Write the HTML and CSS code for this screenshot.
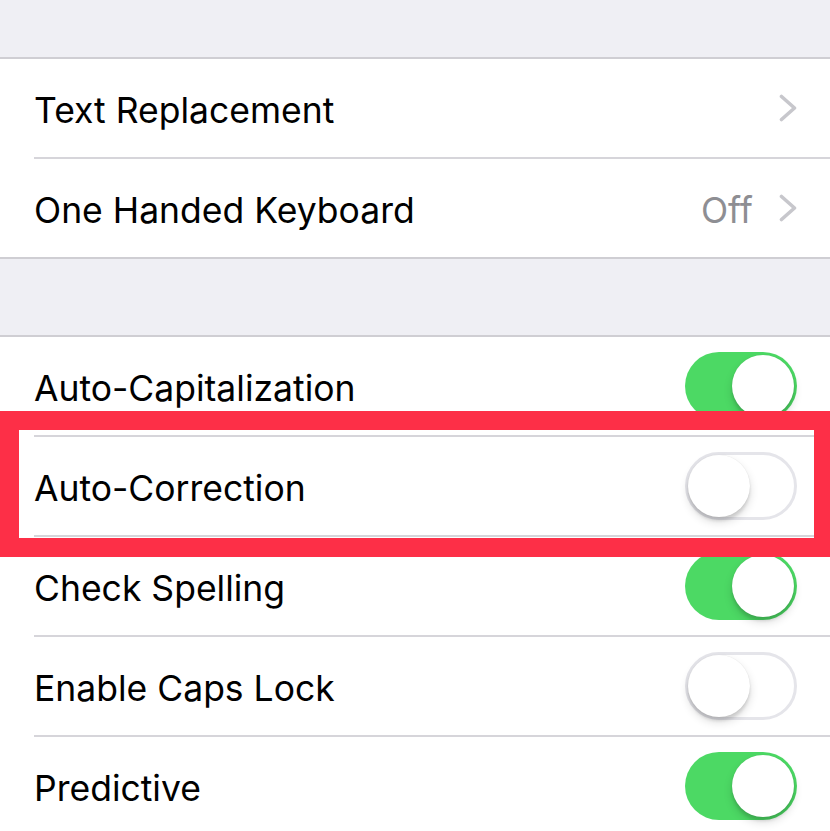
FILE: index.html
```html
<!DOCTYPE html>
<html>
<head>
<meta charset="utf-8">
<link rel="stylesheet" href="styles.css">
</head>
<body>
<div class="screen">
  <div class="spacer top"></div>
  <div class="group">
    <div class="row"><div class="inner"><span class="label">Text Replacement</span>
      <span class="accessory"><svg class="chev" width="18" height="28" viewBox="0 0 18 28"><polyline points="2.5,2.5 15.5,14 2.5,25.5" fill="none" stroke="#c7c7cc" stroke-width="3.6" stroke-linecap="round" stroke-linejoin="round"/></svg></span></div></div>
    <div class="row"><div class="inner"><span class="label">One Handed Keyboard</span>
      <span class="accessory"><span class="value">Off</span><svg class="chev" width="18" height="28" viewBox="0 0 18 28"><polyline points="2.5,2.5 15.5,14 2.5,25.5" fill="none" stroke="#c7c7cc" stroke-width="3.6" stroke-linecap="round" stroke-linejoin="round"/></svg></span></div></div>
  </div>
  <div class="spacer mid"></div>
  <div class="group">
    <div class="row"><div class="inner"><span class="label">Auto-Capitalization</span><span class="toggle on"><span class="knob"></span></span></div></div>
    <div class="row"><div class="inner"><span class="label">Auto-Correction</span><span class="toggle off"><span class="knob"></span></span></div></div>
    <div class="row"><div class="inner"><span class="label">Check Spelling</span><span class="toggle on"><span class="knob"></span></span></div></div>
    <div class="row"><div class="inner"><span class="label">Enable Caps Lock</span><span class="toggle off"><span class="knob"></span></span></div></div>
    <div class="row"><div class="inner"><span class="label">Predictive</span><span class="toggle on"><span class="knob"></span></span></div></div>
  </div>
  <div class="highlight"></div>
</div>
</body>
</html>
```
FILE: styles.css
```css
html, body {
  margin: 0;
  padding: 0;
}
body {
  background: #efeff4;
  font-family: Inter, "Noto Sans", "Liberation Sans", sans-serif;
  overflow: hidden;
}
.screen {
  position: relative;
  width: 830px;
  height: 831px;
  overflow: hidden;
}
.spacer.top { height: 57px; }
.spacer.mid { height: 76px; }
.group {
  background: #fff;
  border-top: 2px solid #cfced3;
  border-bottom: 2px solid #cfced3;
}
.row {
  padding-left: 34px;
}
.inner {
  height: 98px;
  display: flex;
  align-items: center;
  justify-content: space-between;
  padding-right: 33px;
  border-bottom: 2px solid #d6d5da;
}
.row:last-child .inner {
  border-bottom: none;
}
.label {
  font-size: 35.5px;
  color: #000;
  padding-top: 4px;
}
.accessory {
  display: flex;
  align-items: center;
  gap: 26px;
}
.value {
  font-size: 35.5px;
  color: #8e8e93;
  padding-top: 4px;
}
.chev { display: block; }
.toggle {
  position: relative;
  width: 112px;
  height: 68px;
  border-radius: 34px;
  box-sizing: border-box;
  flex: none;
}
.toggle.on {
  background: #4cd964;
}
.toggle.off {
  background: #fff;
  border: 3px solid #e5e5ea;
}
.knob {
  position: absolute;
  width: 62px;
  height: 62px;
  border-radius: 50%;
  background: #fff;
  box-shadow: 0 4px 3px rgba(0,0,0,0.10), 0 5px 10px rgba(0,0,0,0.14), 0 0 1px rgba(0,0,0,0.12);
}
.toggle.on .knob {
  top: 3px;
  right: 3px;
}
.toggle.off .knob {
  top: 0;
  left: 0;
}
.highlight {
  position: absolute;
  top: 411px;
  left: 0;
  width: 795px;
  height: 108px;
  border: 19px solid #fd2f47;
}
```
